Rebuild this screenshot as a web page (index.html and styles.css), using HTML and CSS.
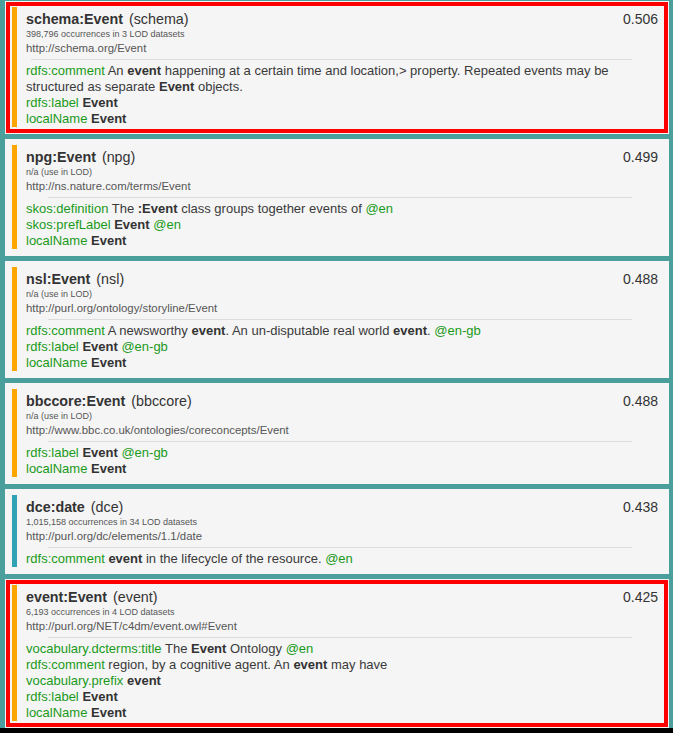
FILE: index.html
```html
<!DOCTYPE html>
<html>
<head>
<meta charset="utf-8">
<link rel="stylesheet" href="styles.css">
</head>
<body>
<div class="list">

  <div class="card hl">
    <div class="bar"></div>
    <div class="content">
      <div class="head"><div class="title"><b>schema:Event</b><span class="prefix">(schema)</span></div><div class="score">0.506</div></div>
      <div class="occ">398,796 occurrences in 3 LOD datasets</div>
      <div class="uri">http://schema.org/Event</div>
      <div class="rule wide"></div>
      <div class="props">
        <p class="row"><span class="key">rdfs:comment</span> An <b>event</b> happening at a certain time and location,&gt; property. Repeated events may be<br>structured as separate <b>Event</b> objects.</p>
        <p class="row"><span class="key">rdfs:label</span> <b>Event</b></p>
        <p class="row"><span class="key">localName</span> <b>Event</b></p>
      </div>
    </div>
  </div>

  <div class="card">
    <div class="bar"></div>
    <div class="content">
      <div class="head"><div class="title"><b>npg:Event</b><span class="prefix">(npg)</span></div><div class="score">0.499</div></div>
      <div class="occ">n/a (use in LOD)</div>
      <div class="uri">http://ns.nature.com/terms/Event</div>
      <div class="rule"></div>
      <div class="props">
        <p class="row"><span class="key">skos:definition</span> The <b>:Event</b> class groups together events of <span class="key">@en</span></p>
        <p class="row"><span class="key">skos:prefLabel</span> <b>Event</b> <span class="key">@en</span></p>
        <p class="row"><span class="key">localName</span> <b>Event</b></p>
      </div>
    </div>
  </div>

  <div class="card">
    <div class="bar"></div>
    <div class="content">
      <div class="head"><div class="title"><b>nsl:Event</b><span class="prefix">(nsl)</span></div><div class="score">0.488</div></div>
      <div class="occ">n/a (use in LOD)</div>
      <div class="uri">http://purl.org/ontology/storyline/Event</div>
      <div class="rule"></div>
      <div class="props">
        <p class="row"><span class="key">rdfs:comment</span> A newsworthy <b>event</b>. An un-disputable real world <b>event</b>. <span class="key">@en-gb</span></p>
        <p class="row"><span class="key">rdfs:label</span> <b>Event</b> <span class="key">@en-gb</span></p>
        <p class="row"><span class="key">localName</span> <b>Event</b></p>
      </div>
    </div>
  </div>

  <div class="card">
    <div class="bar"></div>
    <div class="content">
      <div class="head"><div class="title"><b>bbccore:Event</b><span class="prefix">(bbccore)</span></div><div class="score">0.488</div></div>
      <div class="occ">n/a (use in LOD)</div>
      <div class="uri">http://www.bbc.co.uk/ontologies/coreconcepts/Event</div>
      <div class="rule"></div>
      <div class="props">
        <p class="row"><span class="key">rdfs:label</span> <b>Event</b> <span class="key">@en-gb</span></p>
        <p class="row"><span class="key">localName</span> <b>Event</b></p>
      </div>
    </div>
  </div>

  <div class="card">
    <div class="bar prop"></div>
    <div class="content">
      <div class="head"><div class="title"><b>dce:date</b><span class="prefix">(dce)</span></div><div class="score">0.438</div></div>
      <div class="occ">1,015,158 occurrences in 34 LOD datasets</div>
      <div class="uri">http://purl.org/dc/elements/1.1/date</div>
      <div class="rule"></div>
      <div class="props">
        <p class="row"><span class="key">rdfs:comment</span> <b>event</b> in the lifecycle of the resource. <span class="key">@en</span></p>
      </div>
    </div>
  </div>

  <div class="card hl">
    <div class="bar"></div>
    <div class="content">
      <div class="head"><div class="title"><b>event:Event</b><span class="prefix">(event)</span></div><div class="score">0.425</div></div>
      <div class="occ">6,193 occurrences in 4 LOD datasets</div>
      <div class="uri">http://purl.org/NET/c4dm/event.owl#Event</div>
      <div class="rule"></div>
      <div class="props">
        <p class="row"><span class="key">vocabulary.dcterms:title</span> The <b>Event</b> Ontology <span class="key">@en</span></p>
        <p class="row"><span class="key">rdfs:comment</span> region, by a cognitive agent. An <b>event</b> may have</p>
        <p class="row"><span class="key">vocabulary.prefix</span> <b>event</b></p>
        <p class="row"><span class="key">rdfs:label</span> <b>Event</b></p>
        <p class="row"><span class="key">localName</span> <b>Event</b></p>
      </div>
    </div>
  </div>

</div>
</body>
</html>
```

FILE: styles.css
```css
html {
  background: #000;
}
body {
  margin: 0;
  background: #4a9e9b;
  font-family: "Liberation Sans", Arial, Helvetica, sans-serif;
  color: #3a3a3a;
}
.list {
  display: flex;
  flex-direction: column;
  gap: 5px;
  padding: 1px 4px 0 5px;
}
.card {
  display: flex;
  background: #f5f5f5;
  padding: 6px 11px 7px 7px;
}
.card.hl {
  box-shadow: inset 0 0 0 1px #f5f5f5, inset 0 0 0 5px #ff0000;
}
.bar {
  width: 5px;
  flex: none;
  background: #ffa500;
}
.bar.prop {
  background: #2fa3b3;
}
.content {
  flex: 1;
  margin-left: 9px;
  min-width: 0;
}
.head {
  display: flex;
  justify-content: space-between;
  align-items: baseline;
  height: 22px;
  line-height: 22px;
  padding-top: 1px;
  box-sizing: border-box;
}
.title {
  font-size: 14.3px;
  color: #333;
}
.title b {
  font-weight: bold;
}
.prefix {
  margin-left: 6px;
}
.score {
  font-size: 14px;
  color: #333;
}
.occ {
  font-size: 9px;
  line-height: 11px;
  color: #555;
}
.uri {
  font-size: 11.4px;
  line-height: 16px;
  color: #555;
}
.rule {
  height: 1px;
  background: #dcdcdc;
  margin: 3px 26px 3px 22px;
}
.rule.wide {
  margin-left: 5px;
}
.props {
  display: flex;
  flex-direction: column;
}
.row {
  margin: 0;
  font-size: 13px;
  line-height: 16px;
  color: #3a3a3a;
}
.row b {
  color: #333;
}
.key {
  color: #1a9a1a;
}
```
